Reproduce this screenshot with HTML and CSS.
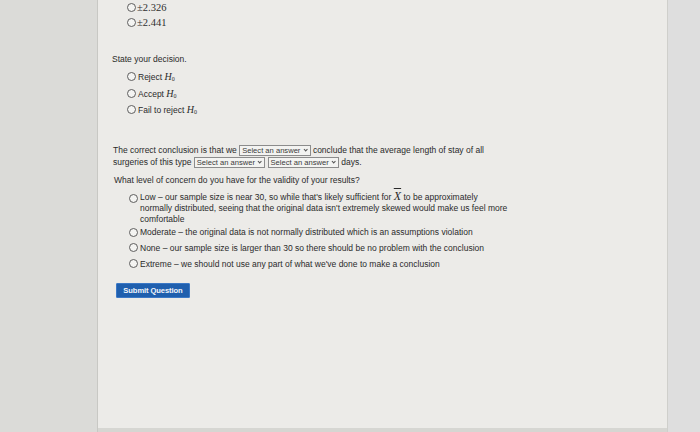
FILE: index.html
```html
<!DOCTYPE html>
<html>
<head>
<meta charset="utf-8">
<link rel="stylesheet" href="styles.css">
</head>
<body>
<div class="page">
  <div class="gutter-left"></div>
  <div class="panel">
    <div class="opts serif-opts">
      <div class="opt"><span class="radio"></span><span class="num">±2.326</span></div>
      <div class="opt"><span class="radio"></span><span class="num">±2.441</span></div>
    </div>

    <p class="q q-decision">State your decision.</p>
    <div class="opts decision">
      <div class="opt"><span class="radio"></span><span>Reject <i class="m">H</i><sub class="m">0</sub></span></div>
      <div class="opt"><span class="radio"></span><span>Accept <i class="m">H</i><sub class="m">0</sub></span></div>
      <div class="opt"><span class="radio"></span><span>Fail to reject <i class="m">H</i><sub class="m">0</sub></span></div>
    </div>

    <p class="q conclusion">The correct conclusion is that we <span class="sel">Select an answer <span class="chev"></span></span> conclude that the average length of stay of all<br>surgeries of this type <span class="sel">Select an answer <span class="chev"></span></span> <span class="sel">Select an answer <span class="chev"></span></span> days.</p>

    <p class="q q-level">What level of concern do you have for the validity of your results?</p>
    <div class="opts level">
      <div class="opt multi"><span class="radio"></span><span class="txt">Low – our sample size is near 30, so while that's likely sufficient for <i class="m xbar">X</i> to be approximately<br>normally distributed, seeing that the original data isn't extremely skewed would make us feel more<br>comfortable</span></div>
      <div class="opt"><span class="radio"></span><span>Moderate – the original data is not normally distributed which is an assumptions violation</span></div>
      <div class="opt"><span class="radio"></span><span>None – our sample size is larger than 30 so there should be no problem with the conclusion</span></div>
      <div class="opt"><span class="radio"></span><span>Extreme – we should not use any part of what we've done to make a conclusion</span></div>
    </div>

    <button class="submit">Submit Question</button>
  </div>
  <div class="gutter-right"></div>
</div>
</body>
</html>
```
FILE: styles.css
```css
html, body {
  margin: 0;
  padding: 0;
}
body {
  width: 700px;
  height: 432px;
  overflow: hidden;
  background: #d9d9d6;
  font-family: "Liberation Sans", Arial, sans-serif;
  color: #2a2a2a;
}
.page {
  display: flex;
  height: 432px;
}
.gutter-left {
  width: 97px;
  flex: none;
  background: #dbdbd8;
  border-right: 1px solid #c8c8c4;
}
.panel {
  width: 569px;
  flex: none;
  background: #ecebe8;
  padding: 0 0 0 14px;
  box-sizing: border-box;
  font-size: 8.5px;
  border-bottom: 4px solid #d6d6d2;
}
.gutter-right {
  flex: 1;
  background: #dedede;
  border-left: 1px solid #cfcfcb;
}
.opts {
  display: flex;
  flex-direction: column;
}
.opt {
  display: flex;
  align-items: center;
  gap: 2px;
}
.radio {
  width: 7px;
  height: 7px;
  border: 1px solid #5e5e5e;
  border-radius: 50%;
  background: #f4f4f2;
  flex: none;
}
.serif-opts {
  margin-left: 15px;
}
.serif-opts .opt {
  height: 15px;
  gap: 1px;
}
.num {
  font-family: "Liberation Serif", "Times New Roman", serif;
  font-size: 10.5px;
  color: #2f2f2f;
}
.q {
  margin: 0;
  line-height: 12px;
}
.q-decision {
  margin-top: 23px;
}
.decision {
  margin-left: 15px;
  margin-top: 3px;
}
.decision .opt {
  height: 16.8px;
  gap: 2px;
}
.m {
  font-family: "Liberation Serif", "Times New Roman", serif;
  font-style: italic;
  font-size: 10px;
}
sub.m {
  font-style: normal;
  font-size: 6px;
  vertical-align: -1px;
}
.conclusion {
  margin-top: 26px;
  margin-left: 1px;
  line-height: 12px;
}
.sel {
  display: inline-block;
  border: 1px solid #8c8c8c;
  background: #f3f3f1;
  font-size: 7.6px;
  line-height: 9px;
  padding: 0 1px 0 2px;
  color: #3a3a3a;
  vertical-align: 0px;
}
.chev {
  display: inline-block;
  width: 6px;
  height: 6px;
  position: relative;
  vertical-align: 0px;
}
.chev::after {
  content: "";
  position: absolute;
  left: 1.2px;
  top: 0.2px;
  width: 2.4px;
  height: 2.4px;
  border-right: 0.8px solid #555;
  border-bottom: 0.8px solid #555;
  transform: rotate(45deg);
}
.q-level {
  margin-top: 6px;
  margin-left: 2px;
}
.level {
  margin-left: 17px;
  margin-top: 6px;
}
.level .opt {
  min-height: 15.7px;
}
.level .opt.multi {
  align-items: flex-start;
  margin-bottom: -1px;
}
.level .opt.multi .radio {
  margin-top: 2px;
}
.txt {
  line-height: 11px;
}
.xbar {
  font-size: 12px;
  text-decoration: overline;
  line-height: 8px;
}
.submit {
  display: block;
  margin-top: 12px;
  margin-left: 4px;
  width: 74px;
  height: 15px;
  padding: 0;
  background: #1f5fae;
  border: 1px solid #3b78c6;
  border-radius: 1px;
  color: #f2f6fb;
  font-family: "Liberation Sans", Arial, sans-serif;
  font-weight: bold;
  font-size: 7.6px;
  letter-spacing: -0.1px;
}
```
